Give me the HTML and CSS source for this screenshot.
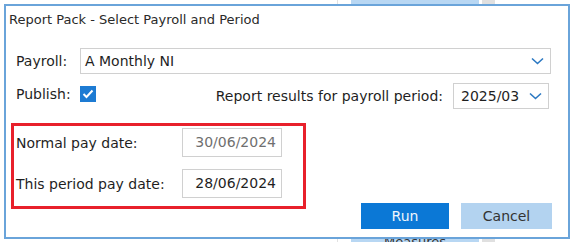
FILE: index.html
```html
<!DOCTYPE html>
<html lang="en">
<head>
  <meta charset="UTF-8" />
  <meta name="viewport" content="width=device-width, initial-scale=1.0"/>
  <title>Report Pack</title>
  <link rel="stylesheet" href="styles.css">
</head>
<body>
  <div class="backdrop">
    <div class="tick"></div>
    <div class="column"><span class="column-text">Measures</span></div>
    <div class="scroll"></div>
  </div>

  <div class="dialog">
    <div class="title">Report Pack - Select Payroll and Period</div>

    <div class="form">
      <div class="row">
        <span class="label">Payroll:</span>
        <div class="select wide">
          <span>A Monthly NI</span>
          <svg class="chevron" width="13" height="8" viewBox="0 0 13 8"><path d="M1 1.5 L6.5 6.5 L12 1.5" fill="none" stroke="#2b78c2" stroke-width="1.6"/></svg>
        </div>
      </div>

      <div class="row split">
        <div class="publish">
          <span class="label">Publish:</span>
          <span class="checkbox">
            <svg width="12" height="10" viewBox="0 0 12 10"><path d="M1.5 5 L4.5 8 L10.5 1.5" fill="none" stroke="white" stroke-width="2"/></svg>
          </span>
        </div>
        <div class="period">
          <span>Report results for payroll period:</span>
          <div class="select small">
            <span>2025/03</span>
            <svg class="chevron" width="13" height="8" viewBox="0 0 13 8"><path d="M1 1.5 L6.5 6.5 L12 1.5" fill="none" stroke="#2b78c2" stroke-width="1.6"/></svg>
          </div>
        </div>
      </div>

      <div class="lower">
        <div class="dates">
          <div class="date-row">
            <span class="date-label">Normal pay date:</span>
            <span class="date-box disabled">30/06/2024</span>
          </div>
          <div class="date-row">
            <span class="date-label">This period pay date:</span>
            <span class="date-box">28/06/2024</span>
          </div>
        </div>
        <div class="buttons">
          <button class="btn run">Run</button>
          <button class="btn cancel">Cancel</button>
        </div>
      </div>
    </div>
  </div>
</body>
</html>
```

FILE: styles.css
```css
body, html {
  margin: 0;
  padding: 0;
  width: 100%;
  height: 100%;
  background-color: white;
  font-family: "DejaVu Sans", Verdana, sans-serif;
  font-size: 14px;
  color: #1f1f1f;
  overflow: hidden;
}

/* the window behind the dialog */
.backdrop {
  display: flex;
  height: 100%;
  padding-left: 337px;
}

.tick {
  width: 1px;
  height: 100%;
  background-color: #e2e2e2;
  margin-right: 13px;
}

.column {
  width: 128px;
  height: 100%;
  background-color: #b8d7f3;
  display: flex;
  flex-direction: column;
  justify-content: flex-end;
  align-items: center;
}

.column-text {
  font-size: 13px;
  line-height: 10px;
  margin-bottom: -5px;
  color: #333;
}

.scroll {
  width: 13px;
  height: 100%;
  background-color: #e0e0e0;
  margin-left: 3px;
}

.dialog {
  position: absolute;
  left: 4px;
  top: 4px;
  width: 562px;
  height: 231px;
  border: 2px solid #6aa4da;
  background-color: white;
}

.title {
  height: 28px;
  line-height: 28px;
  padding-left: 3px;
  font-size: 13px;
  color: #2a2a2a;
}

.form {
  padding: 14px 17px 8px 10px;
}

.row {
  display: flex;
  align-items: center;
  height: 26px;
}

.row.split {
  justify-content: space-between;
  margin-top: 9px;
}

.label {
  width: 64px;
}

.select {
  display: flex;
  align-items: center;
  justify-content: space-between;
  box-sizing: border-box;
  height: 26px;
  border: 1px solid #d0d0d0;
  padding: 0 6px 0 4px;
}

.select.wide {
  flex: 1;
}

.select.small {
  width: 96px;
  margin-left: 10px;
  margin-right: 2px;
  padding-left: 7px;
}

.publish, .period {
  display: flex;
  align-items: center;
}

.publish {
  margin-top: -4px;
}

.checkbox {
  width: 16px;
  height: 16px;
  background-color: #1d7bd3;
  display: flex;
  align-items: center;
  justify-content: center;
}

.lower {
  display: flex;
  justify-content: space-between;
  height: 106px;
  margin-top: 14px;
  margin-left: -5px;
  margin-right: -1px;
}

.dates {
  align-self: flex-start;
  width: 287px;
  height: 78px;
  border: 3px solid #e8202b;
  padding: 2px 0 0 2px;
}

.date-row {
  display: flex;
  align-items: center;
  height: 29px;
  margin-bottom: 12px;
}

.date-label {
  width: 166px;
}

.date-box {
  box-sizing: border-box;
  width: 100px;
  height: 29px;
  line-height: 27px;
  border: 1px solid #d0d0d0;
  text-align: right;
  padding-right: 5px;
}

.date-box.disabled {
  color: #6f6f6f;
}

.buttons {
  display: flex;
  align-self: flex-end;
  gap: 12px;
}

.btn {
  height: 26px;
  border: none;
  font-family: "DejaVu Sans", Verdana, sans-serif;
  font-size: 14px;
  padding: 0;
}

.run {
  width: 88px;
  background-color: #0b78d6;
  color: #eef5fc;
}

.cancel {
  width: 91px;
  background-color: #b3d3f0;
  color: #333;
}
```
